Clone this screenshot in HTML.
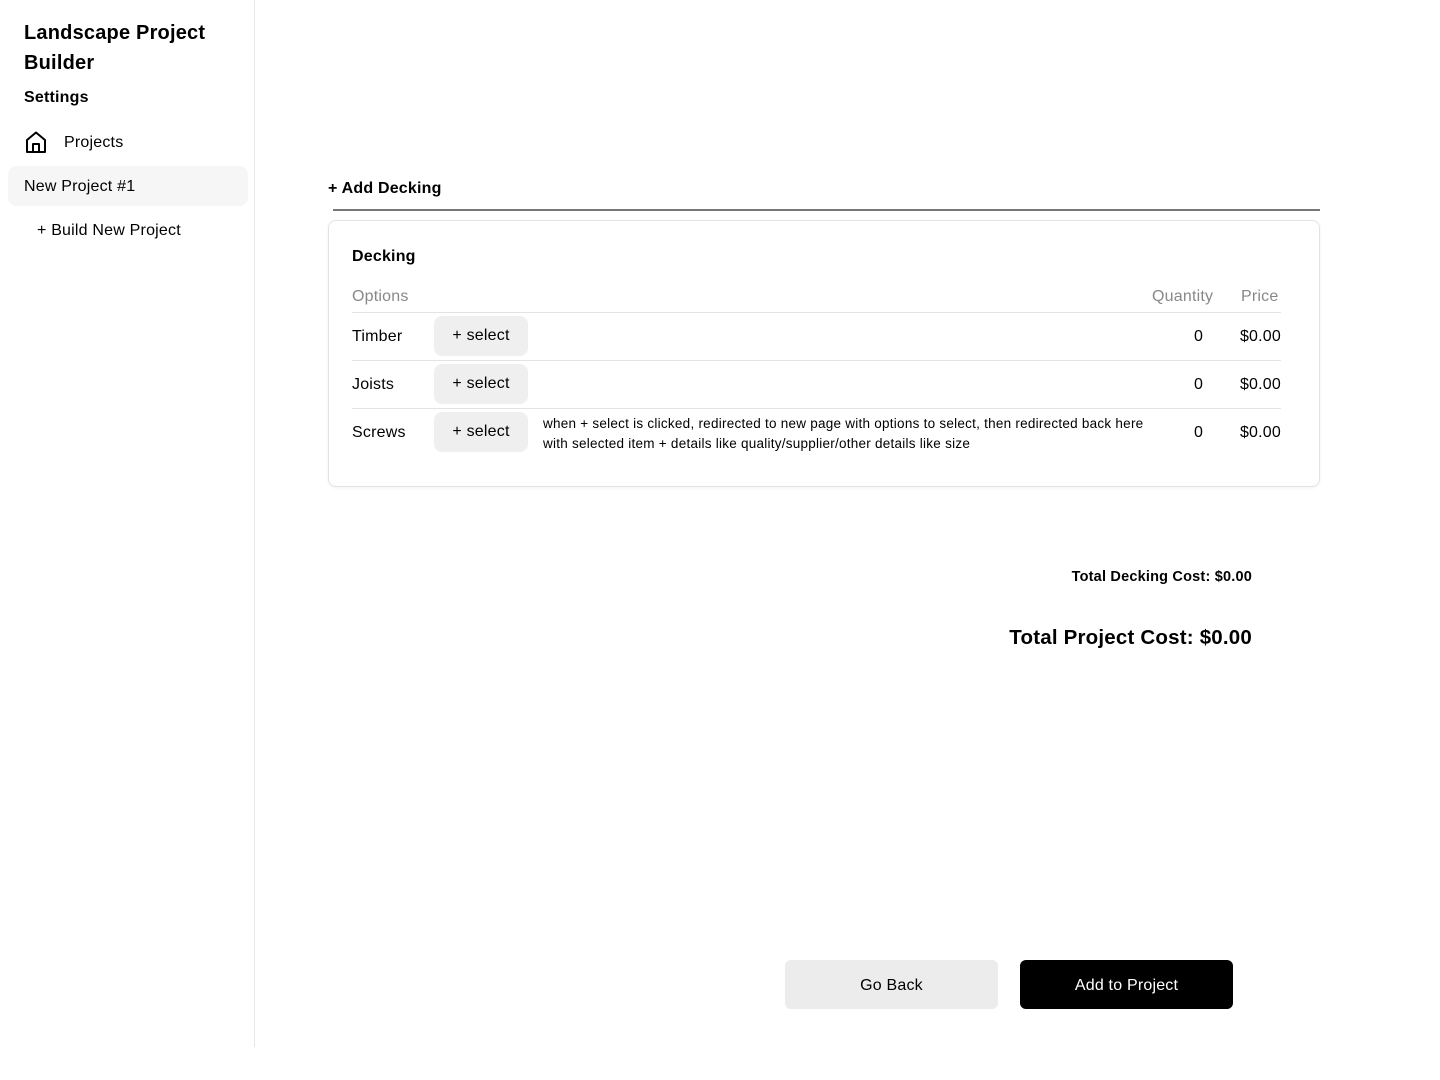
<!DOCTYPE html>
<html><head><style>
*{margin:0;padding:0;box-sizing:border-box}
body{width:1440px;height:1080px;background:#fff;font-family:"Liberation Sans",sans-serif;color:#000;position:relative;overflow:hidden;letter-spacing:0.2px}
.a{position:absolute;white-space:nowrap}
.sb{position:absolute;left:0;top:0;width:255px;height:1047px;border-right:1px solid #e6e6e6}
.btn{position:absolute;left:434px;width:94px;height:40px;background:#efefef;border-radius:8px;font-size:16px;text-align:center;line-height:40px}
.hr{position:absolute;left:352px;width:929px;height:1px;background:#e3e3e3}
.r{text-align:right}
</style></head><body>
<div class="sb"></div>
<div class="a" style="left:24px;top:18px;font-size:20px;font-weight:bold;line-height:30px">Landscape Project<br>Builder</div>
<div class="a" style="left:24px;top:89px;font-size:16px;font-weight:bold">Settings</div>
<svg class="a" style="left:24px;top:130px" width="24" height="24" viewBox="0 0 24 24" fill="none" stroke="#000" stroke-width="2" stroke-linejoin="round"><path d="M3 10 L12 2.5 L21 10 V22 H3 Z"/><path d="M9 22 V14 H15 V22"/></svg>
<div class="a" style="left:64px;top:134px;font-size:16px">Projects</div>
<div class="a" style="left:8px;top:166px;width:240px;height:40px;background:#f6f6f6;border-radius:8px"></div>
<div class="a" style="left:24px;top:178px;font-size:16px">New Project #1</div>
<div class="a" style="left:37px;top:222px;font-size:16px">+ Build New Project</div>

<div class="a" style="left:328px;top:180px;font-size:16px;font-weight:bold">+ Add Decking</div>
<div class="a" style="left:333px;top:209px;width:987px;height:2px;background:#777"></div>
<div class="a" style="left:328px;top:220px;width:992px;height:267px;border:1px solid #e3e3e3;border-radius:8px;box-shadow:0 1px 3px rgba(0,0,0,.05)"></div>
<div class="a" style="left:352px;top:248px;font-size:16px;font-weight:bold">Decking</div>
<div class="a" style="left:352px;top:288px;font-size:16px;color:#888">Options</div>
<div class="a" style="left:1152px;top:288px;font-size:16px;color:#888">Quantity</div>
<div class="a" style="left:1241px;top:288px;font-size:16px;color:#888">Price</div>
<div class="hr" style="top:312px"></div>
<div class="hr" style="top:360px"></div>
<div class="hr" style="top:408px"></div>
<div class="a" style="left:352px;top:328px;font-size:16px">Timber</div>
<div class="a" style="left:352px;top:376px;font-size:16px">Joists</div>
<div class="a" style="left:352px;top:424px;font-size:16px">Screws</div>
<div class="btn" style="top:316px">+ select</div>
<div class="btn" style="top:364px">+ select</div>
<div class="btn" style="top:412px">+ select</div>
<div class="a" style="left:543px;top:414px;font-size:13.5px;line-height:20px;letter-spacing:0.25px">when + select is clicked, redirected to new page with options to select, then redirected back here<br>with selected item + details like quality/supplier/other details like size</div>
<div class="a" style="left:1194px;top:328px;font-size:16px">0</div>
<div class="a" style="left:1194px;top:376px;font-size:16px">0</div>
<div class="a" style="left:1194px;top:424px;font-size:16px">0</div>
<div class="a r" style="right:159px;top:328px;font-size:16px">$0.00</div>
<div class="a r" style="right:159px;top:376px;font-size:16px">$0.00</div>
<div class="a r" style="right:159px;top:424px;font-size:16px">$0.00</div>

<div class="a r" style="right:188px;top:569px;font-size:14.5px;font-weight:bold">Total Decking Cost: $0.00</div>
<div class="a r" style="right:188px;top:626px;font-size:20.5px;font-weight:bold">Total Project Cost: $0.00</div>

<div class="a" style="left:785px;top:960px;width:213px;height:49px;background:#ececec;border-radius:6px;font-size:16px;text-align:center;line-height:51px">Go Back</div>
<div class="a" style="left:1020px;top:960px;width:213px;height:49px;background:#000;color:#fff;border-radius:6px;font-size:16px;text-align:center;line-height:51px">Add to Project</div>
</body></html>
